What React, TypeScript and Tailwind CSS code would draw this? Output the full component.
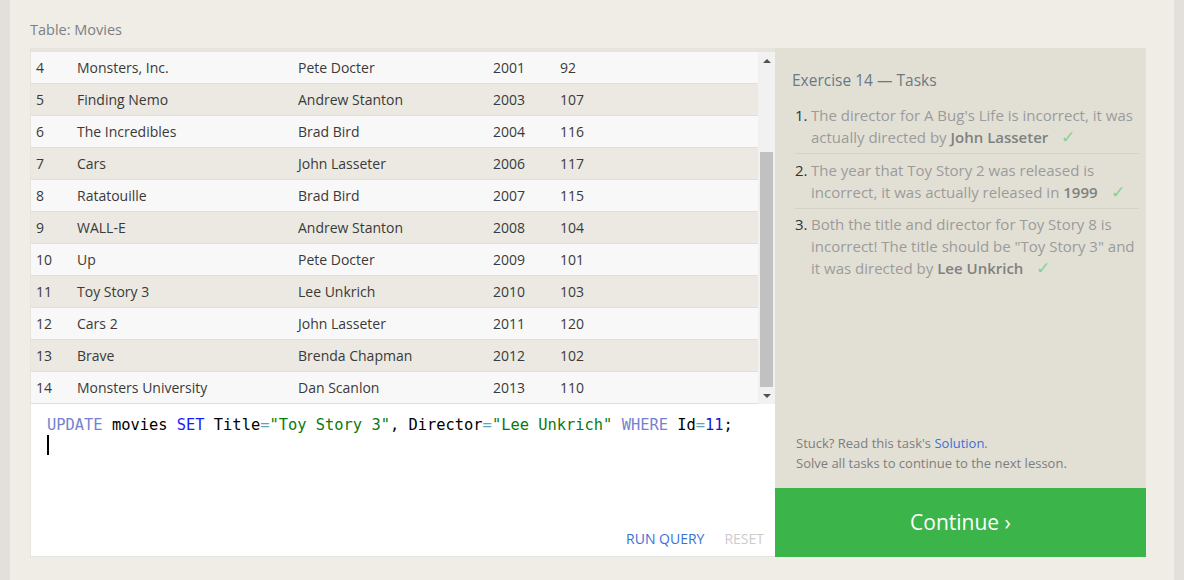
const movies = [
  [4, "Monsters, Inc.", "Pete Docter", 2001, 92],
  [5, "Finding Nemo", "Andrew Stanton", 2003, 107],
  [6, "The Incredibles", "Brad Bird", 2004, 116],
  [7, "Cars", "John Lasseter", 2006, 117],
  [8, "Ratatouille", "Brad Bird", 2007, 115],
  [9, "WALL-E", "Andrew Stanton", 2008, 104],
  [10, "Up", "Pete Docter", 2009, 101],
  [11, "Toy Story 3", "Lee Unkrich", 2010, 103],
  [12, "Cars 2", "John Lasseter", 2011, 120],
  [13, "Brave", "Brenda Chapman", 2012, 102],
  [14, "Monsters University", "Dan Scanlon", 2013, 110],
];

const font = { fontFamily: "'Open Sans', 'Noto Sans', sans-serif" };

function Check() {
  return <span className="inline-block ml-[13px] text-[17px] leading-[20px] text-[#86d092]">✓</span>;
}

function Scrollbar() {
  return (
    <div className="w-[17px] shrink-0 bg-[#f1f1f1] flex flex-col items-center">
      <div className="h-[17px] w-full flex items-center justify-center">
        <div className="w-0 h-0 border-x-[4px] border-x-transparent border-b-[4px] border-b-[#505050]" />
      </div>
      <div className="h-[83px]" />
      <div className="w-[13px] h-[235px] bg-[#c1c1c1]" />
      <div className="flex-1" />
      <div className="h-[17px] w-full flex items-center justify-center">
        <div className="w-0 h-0 border-x-[4px] border-x-transparent border-t-[4px] border-t-[#505050]" />
      </div>
    </div>
  );
}

export default function App() {
  return (
    <div className="flex h-[580px] w-full bg-[#efede6] text-[#333]" style={font}>
      <div className="w-[10px] bg-[#e3e0dc]" />
      <div className="flex-1 pl-[20px] pr-[28px]">
        <div className="pt-[20px] h-[48px] text-[14.5px] leading-[20px] text-[#7b8087]">Table: Movies</div>
        <div className="flex h-[509px]">
          {/* Query pane */}
          <div className="w-[745px] flex flex-col border-t-[3px] border-l border-[#e6e4dc]">
            <div className="flex h-[353px] border-t border-[#e3e3e3] overflow-hidden">
              <div className="flex-1">
                {movies.map((m, i) => (
                  <div
                    key={i}
                    className={`flex h-[32px] items-center border-b border-[#dedede] text-[14px] text-[#3a3a3a] ${
                      i % 2 === 0 ? "bg-[#f8f8f8]" : "bg-[#ebe9e2]"
                    }`}
                  >
                    <div className="w-[46px] pl-[5px]">{m[0]}</div>
                    <div className="w-[221px]">{m[1]}</div>
                    <div className="w-[195px]">{m[2]}</div>
                    <div className="w-[67px]">{m[3]}</div>
                    <div>{m[4]}</div>
                  </div>
                ))}
              </div>
              <Scrollbar />
            </div>
            <div className="flex-1 bg-white border-b border-[#e3e3e3] flex flex-col">
              <div
                className="pl-[16px] pt-[10px] text-[15.4px] leading-[22px] text-black whitespace-pre"
                style={{ fontFamily: "'DejaVu Sans Mono', 'Liberation Mono', monospace" }}
              >
                <div>
                  <span className="text-[#7582d2]">UPDATE</span> movies <span className="text-[#1a1aff]">SET</span> Title
                  <span className="text-[#5aa6b8]">=</span>
                  <span className="text-[#0a7a0a]">"Toy Story 3"</span>, Director
                  <span className="text-[#5aa6b8]">=</span>
                  <span className="text-[#0a7a0a]">"Lee Unkrich"</span> <span className="text-[#7582d2]">WHERE</span> Id
                  <span className="text-[#5aa6b8]">=</span>
                  <span className="text-[#1414d8]">11</span>;
                </div>
                <div className="h-[20px] w-[2px] bg-black mt-[-1px]" />
              </div>
              <div className="flex-1" />
              <div className="flex justify-end gap-[20px] pr-[11px] pb-[7px] text-[14px] leading-[20px]">
                <span className="text-[#3b71d6]">RUN QUERY</span>
                <span className="text-[#cccccc]">RESET</span>
              </div>
            </div>
          </div>
          {/* Tasks pane */}
          <div className="w-[371px] flex flex-col bg-[#e2e0d5]">
            <div className="flex-1 pl-[17px] pr-[7px] pt-[20px]">
              <div className="text-[15.5px] leading-[24px] text-[#6b7886]">Exercise 14 — Tasks</div>
              <ol className="mt-[12px] text-[15px] leading-[22px] text-[#9b9b9b]">
                <li className="flex pb-[5px] border-b border-[#d5d3c8] ml-[3px]">
                  <span className="w-[16px] shrink-0 text-[#333]">1.</span>
                  <span>
                    The director for A Bug's Life is incorrect, it was actually directed by{" "}
                    <b className="font-semibold text-[#808080]">John Lasseter</b>
                    <Check />
                  </span>
                </li>
                <li className="flex py-[5px] border-b border-[#d5d3c8] ml-[3px]">
                  <span className="w-[16px] shrink-0 text-[#333]">2.</span>
                  <span>
                    The year that Toy Story 2 was released is incorrect, it was actually released in{" "}
                    <b className="font-semibold text-[#808080]">1999</b>
                    <Check />
                  </span>
                </li>
                <li className="flex pt-[4px] pb-[5px] ml-[3px]">
                  <span className="w-[16px] shrink-0 text-[#333]">3.</span>
                  <span>
                    Both the title and director for Toy Story 8 is incorrect! The title should be "Toy Story 3" and it was
                    directed by <b className="font-semibold text-[#808080]">Lee Unkrich</b>
                    <Check />
                  </span>
                </li>
              </ol>
            </div>
            <div className="px-[21px] pb-[15px] text-[13px] leading-[20px] text-[#7d7d7d]">
              <div>
                Stuck? Read this task's <span className="text-[#3b71d6]">Solution</span>.
              </div>
              <div>Solve all tasks to continue to the next lesson.</div>
            </div>
            <div className="h-[69px] bg-[#3bb54a] flex items-center justify-center text-white text-[21px]">
              Continue ›
            </div>
          </div>
        </div>
      </div>
      <div className="w-[10px] bg-[#e3e0dc]" />
    </div>
  );
}
